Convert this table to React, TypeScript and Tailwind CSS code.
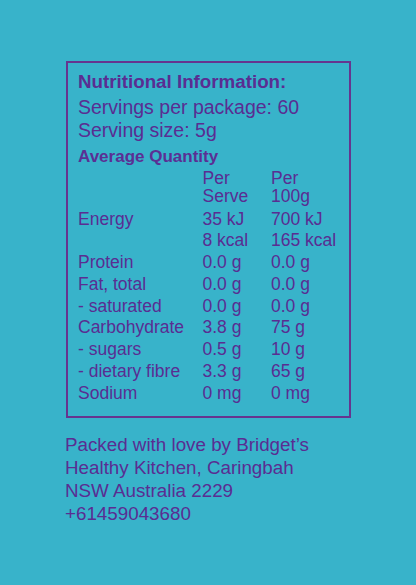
const rows: [string, string, string][] = [
  ['Energy', '35 kJ', '700 kJ'],
  ['', '8 kcal', '165 kcal'],
  ['Protein', '0.0 g', '0.0 g'],
  ['Fat, total', '0.0 g', '0.0 g'],
  ['- saturated', '0.0 g', '0.0 g'],
  ['Carbohydrate', '3.8 g', '75 g'],
  ['- sugars', '0.5 g', '10 g'],
  ['- dietary fibre', '3.3 g', '65 g'],
  ['Sodium', '0 mg', '0 mg'],
]

export default function App() {
  return (
    <div
      className="h-[585px] w-[416px] overflow-hidden bg-[#38b3ca] pt-[61px] text-[#5a2d92]"
      style={{ fontFamily: '"Liberation Sans", Arial, sans-serif' }}
    >
      <div className="ml-[66px] h-[357px] w-[285px] border-2 border-[#66358f] pl-[10px] pt-[7px]">
        <p className="text-[18.75px] font-bold leading-[23px]">Nutritional Information:</p>
        <p className="mt-[3px] text-[19.5px] leading-[23px]">Servings per package: 60</p>
        <p className="text-[19.5px] leading-[23px]">Serving size: 5g</p>
        <p className="mt-[3px] text-[17px] font-bold leading-[23px] text-[#5b2f94]">Average Quantity</p>

        <div className="mt-[2px] grid grid-cols-[124.5px_68.5px_1fr] text-[17.5px]">
          <div />
          <div className="leading-[17.5px]">
            Per
            <br />
            Serve
          </div>
          <div className="leading-[17.5px]">
            Per
            <br />
            100g
          </div>
        </div>

        <div className="mt-[3.5px] grid grid-cols-[124.5px_68.5px_1fr] text-[17.5px] leading-[21.8px]">
          {rows.map(([label, serve, per100]) => (
            <div key={label + serve} className="contents">
              <div>{label}</div>
              <div>{serve}</div>
              <div>{per100}</div>
            </div>
          ))}
        </div>
      </div>

      <div className="ml-[65px] mt-[15px] text-[18.8px] leading-[23px]">
        <p>Packed with love by Bridget’s</p>
        <p>Healthy Kitchen, Caringbah</p>
        <p>NSW Australia 2229</p>
        <p>+61459043680</p>
      </div>
    </div>
  )
}
